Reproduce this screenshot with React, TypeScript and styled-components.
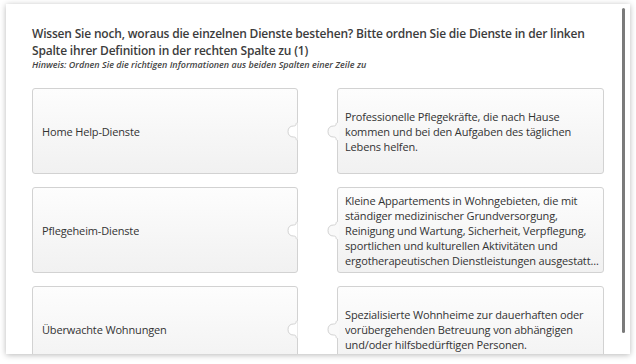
import React from "react";
import styled, { createGlobalStyle } from "styled-components";

const Global = createGlobalStyle`
  html, body { margin: 0; padding: 0; background: #ffffff; }
  body { font-family: "Open Sans", "DejaVu Sans", sans-serif; color: #333; }
  * { box-sizing: border-box; }
`;

const Page = styled.div`
  width: 636px;
  height: 364px;
  padding: 4px 6px 10px 6px;
  overflow: hidden;
`;

const Panel = styled.div`
  position: relative;
  width: 624px;
  height: 350px;
  background: #fff;
  box-shadow: 0 1px 6px rgba(0, 0, 0, 0.28);
  overflow: hidden;
  padding: 21px 26px 0 26px;
`;

const Scrollbar = styled.div`
  position: absolute;
  right: 5px;
  top: 4px;
  width: 3px;
  height: 325px;
  border-radius: 2px;
  background: #7a7a7a;
`;

const Title = styled.div`
  margin: 0;
  font-size: 12px;
  line-height: 17px;
  font-weight: 600;
  letter-spacing: -0.19px;
  color: #3c3c3c;
  white-space: nowrap;
`;

const Hint = styled.div`
  margin-top: 0px;
  font-size: 9px;
  line-height: 12px;
  font-style: italic;
  font-weight: 600;
  color: #444;
`;

const Grid = styled.div`
  display: grid;
  grid-template-columns: 266px 267px;
  column-gap: 39px;
  row-gap: 13px;
  margin-top: 17px;
`;

const Card = styled.div<{ $side: "left" | "right" }>`
  position: relative;
  height: 86px;
  border: 1px solid #d2d2d2;
  border-radius: 3px;
  background: linear-gradient(#fdfdfd, #f1f1f1);
  display: flex;
  align-items: center;
  padding: ${(p) => (p.$side === "left" ? "0 10px 0 9px" : "0 3px 0 7px")};
  font-size: 11px;
  line-height: 15px;
  color: #333;
`;

const CardText = styled.div`
  display: -webkit-box;
  -webkit-line-clamp: 5;
  -webkit-box-orient: vertical;
  overflow: hidden;
  text-overflow: ellipsis;
  letter-spacing: -0.15px;
`;

const Notch = styled.svg`
  position: absolute;
  right: -1px;
  top: 33px;
  width: 12px;
  height: 19px;
`;

const Knob = styled.svg`
  position: absolute;
  left: -12px;
  top: 33px;
  width: 13px;
  height: 19px;
`;

const rows = [
  {
    left: "Home Help-Dienste",
    right:
      "Professionelle Pflegekräfte, die nach Hause kommen und bei den Aufgaben des täglichen Lebens helfen.",
  },
  {
    left: "Pflegeheim-Dienste",
    right:
      "Kleine Appartements in Wohngebieten, die mit ständiger medizinischer Grundversorgung, Reinigung und Wartung, Sicherheit, Verpflegung, sportlichen und kulturellen Aktivitäten und ergotherapeutischen Dienstleistungen ausgestatt...",
  },
  {
    left: "Überwachte Wohnungen",
    right:
      "Spezialisierte Wohnheime zur dauerhaften oder vorübergehenden Betreuung von abhängigen und/oder hilfsbedürftigen Personen.",
  },
];

const NotchShape = () => (
  <Notch viewBox="0 0 12 19">
    <path
      d="M12 0.5 C11 0.5 10 1 10 2.5 C10 3.5 9 4 7.5 4 C4 4 2 6 2 9.5 C2 13 4 15 7.5 15 C9 15 10 15.5 10 16.5 C10 18 11 18.5 12 18.5 Z"
      fill="#ffffff"
      stroke="#d2d2d2"
      strokeWidth="1"
    />
  </Notch>
);

const KnobShape = () => (
  <Knob viewBox="0 0 13 19">
    <path
      d="M12 0.5 C11 0.5 10 1 10 2.5 C10 3.5 9 4 7.5 4 C4 4 2 6 2 9.5 C2 13 4 15 7.5 15 C9 15 10 15.5 10 16.5 C10 18 11 18.5 12 18.5"
      fill="#f9f9f9"
      stroke="#d2d2d2"
      strokeWidth="1"
    />
    <rect x="12" y="1" width="1" height="17" fill="#f9f9f9" />
  </Knob>
);

export default function App() {
  return (
    <>
      <Global />
      <Page>
        <Panel>
          <Title>
            Wissen Sie noch, woraus die einzelnen Dienste bestehen? Bitte ordnen Sie die Dienste in der linken
            <br />
            Spalte ihrer Definition in der rechten Spalte zu (1)
          </Title>
          <Hint>Hinweis: Ordnen Sie die richtigen Informationen aus beiden Spalten einer Zeile zu</Hint>
          <Grid>
            {rows.map((r) => (
              <React.Fragment key={r.left}>
                <Card $side="left">
                  <CardText>{r.left}</CardText>
                  <NotchShape />
                </Card>
                <Card $side="right">
                  <KnobShape />
                  <CardText>{r.right}</CardText>
                </Card>
              </React.Fragment>
            ))}
          </Grid>
          <Scrollbar />
        </Panel>
      </Page>
    </>
  );
}
